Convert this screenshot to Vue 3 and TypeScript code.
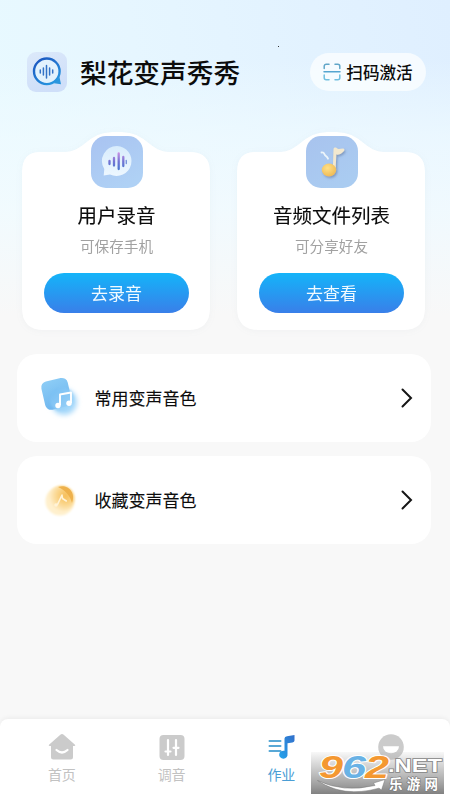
<script setup lang="ts">
interface Card { id: 'record' | 'files'; title: string; note: string; action: string }
interface Row { id: 'common' | 'favorite'; label: string }
interface Tab { id: 'home' | 'tune' | 'work' | 'mine'; label?: string }

const cards: Card[] = [
  { id: 'record', title: '用户录音', note: '可保存手机', action: '去录音' },
  { id: 'files', title: '音频文件列表', note: '可分享好友', action: '去查看' },
]
const rows: Row[] = [
  { id: 'common', label: '常用变声音色' },
  { id: 'favorite', label: '收藏变声音色' },
]
const tabs: Tab[] = [
  { id: 'home', label: '首页' },
  { id: 'tune', label: '调音' },
  { id: 'work', label: '作业' },
  { id: 'mine' },
]
const active: Tab['id'] = 'work'
</script>

<template>
  <div class="page">
    <header class="header">
      <svg class="logo" viewBox="0 0 42 42">
        <defs>
          <linearGradient id="logoBg" x1="0" y1="0" x2="0.4" y2="1">
            <stop offset="0" stop-color="#dce9fa" /><stop offset="1" stop-color="#cfdff9" />
          </linearGradient>
          <linearGradient id="logoRing" x1="0" y1="0" x2="0.7" y2="1">
            <stop offset="0" stop-color="#1b51bd" /><stop offset="1" stop-color="#2796e0" />
          </linearGradient>
        </defs>
        <rect x="1" y="1" width="40" height="40" rx="9" fill="url(#logoBg)" />
        <path d="M28 32.3 L35 33.2 L33.5 26 Z" fill="#2b97de" />
        <circle cx="20.8" cy="20.3" r="12.8" fill="#e2f2fd" stroke="url(#logoRing)" stroke-width="2.4" />
        <path d="M14.3 19v3M17.4 17v7M20.5 14.5v12.5M23.6 17v7M26.7 19v3" stroke="#3272c6" stroke-width="1.5" stroke-linecap="round" />
      </svg>
      <h1 class="brand">梨花变声秀秀</h1>
      <button class="scan">
        <svg class="scan-icon" viewBox="0 0 18 18" fill="none" stroke-width="1.5" stroke-linecap="round">
          <path d="M1.2 5.5V3.2a2 2 0 0 1 2-2H6M12 1.2h2.8a2 2 0 0 1 2 2v2.3" stroke="#61a6c8" />
          <path d="M1.2 12v2.8a2 2 0 0 0 2 2H6M12 16.8h2.8a2 2 0 0 0 2-2V12" stroke="#70bfdf" />
          <path d="M1 8.8h16" stroke="#55a5d0" />
        </svg>
        <span>扫码激活</span>
      </button>
    </header>
    <i class="speck"></i>

    <main>
      <section class="cards">
        <article v-for="card in cards" :key="card.id" class="card">
          <svg class="card-shape" viewBox="0 0 188 200">
            <path
              d="M18 22 H42 C52 22 57 18 66 11 C75 4 82 2 95 2 C108 2 115 4 124 11 C133 18 138 22 148 22 H168 Q188 22 188 42 V178 Q188 200 166 200 H22 Q0 200 0 178 V42 Q0 22 18 22Z"
              fill="#fff"
            />
          </svg>
          <svg v-if="card.id === 'record'" class="badge" viewBox="0 0 52 52">
            <defs>
              <linearGradient id="badgeA" x1="0" y1="0" x2="0.6" y2="1">
                <stop offset="0" stop-color="#a9c3f1" /><stop offset="1" stop-color="#afd1f5" />
              </linearGradient>
              <linearGradient id="bubble" x1="0" y1="0" x2="0" y2="1">
                <stop offset="0" stop-color="#d8ecfc" /><stop offset="1" stop-color="#edf7ff" />
              </linearGradient>
              <linearGradient id="wave" x1="0" y1="16" x2="0" y2="35" gradientUnits="userSpaceOnUse">
                <stop offset="0" stop-color="#cf91e4" /><stop offset=".5" stop-color="#7374d4" /><stop offset="1" stop-color="#4279cf" />
              </linearGradient>
            </defs>
            <rect width="52" height="52" rx="15" fill="url(#badgeA)" />
            <path d="M26 10 A15 15 0 1 1 19 38.5 L12.7 39.5 L13.3 33 A15 15 0 0 1 26 10Z" fill="url(#bubble)" />
            <path d="M18.5 25v3M23 22v7.5M27.7 17.5v15.5M32.3 21v9" stroke="url(#wave)" stroke-width="2.3" stroke-linecap="round" />
            <path d="M35.3 24.5v3" stroke="#7994db" stroke-width="1.4" stroke-linecap="round" />
          </svg>
          <svg v-else class="badge" viewBox="0 0 52 52">
            <defs>
              <linearGradient id="badgeB" x1="0" y1="0" x2="0.6" y2="1">
                <stop offset="0" stop-color="#a8c3ee" /><stop offset="1" stop-color="#aaccf1" />
              </linearGradient>
              <radialGradient id="gold" cx=".4" cy=".35" r=".7">
                <stop offset="0" stop-color="#ffe087" /><stop offset="1" stop-color="#edb954" />
              </radialGradient>
              <filter id="noteShadow" x="-30%" y="-30%" width="170%" height="170%">
                <feDropShadow dx="1.2" dy="1.5" stdDeviation="1.3" flood-color="#60779b" flood-opacity=".6" />
              </filter>
            </defs>
            <rect width="52" height="52" rx="15" fill="url(#badgeB)" />
            <g filter="url(#noteShadow)">
              <path d="M27.5 13 C28 10.8 30.5 11.2 31 12.3 C32.5 13.6 35 12.3 37.3 12.4 C38.8 12.6 38.7 14.5 37.5 15.6 C35 18.3 32.5 19 30.3 18.6 L29.6 34 L26.8 34Z" fill="#f2e8cf" />
              <ellipse cx="23" cy="34" rx="7.2" ry="6.4" fill="url(#gold)" />
            </g>
            <path d="M15.5 16.5 C19 16 18 19 19.8 20 C20.8 20.7 21.3 21 22 22.7" fill="none" stroke="#edf5fa" stroke-width="1.8" stroke-linecap="round" />
          </svg>
          <h2 class="card-title">{{ card.title }}</h2>
          <p class="card-note">{{ card.note }}</p>
          <button class="card-action">{{ card.action }}</button>
        </article>
      </section>

      <section class="rows">
        <div v-for="row in rows" :key="row.id" class="row">
          <svg v-if="row.id === 'common'" class="row-icon" viewBox="0 0 48 48">
            <defs>
              <linearGradient id="tile" x1="0" y1="0" x2="1" y2="1">
                <stop offset="0" stop-color="#72bbf2" /><stop offset="1" stop-color="#abdcfb" />
              </linearGradient>
              <linearGradient id="tileBack" x1="0" y1="0" x2="0.2" y2="1">
                <stop offset="0" stop-color="#8dcdf6" /><stop offset="1" stop-color="#70b7ef" />
              </linearGradient>
              <filter id="soft" x="-40%" y="-40%" width="180%" height="180%"><feGaussianBlur stdDeviation="2.8" /></filter>
              <filter id="softEdge" x="-20%" y="-20%" width="140%" height="140%"><feGaussianBlur stdDeviation="1" /></filter>
            </defs>
            <circle cx="28" cy="28" r="13" fill="#a9d9fa" filter="url(#soft)" />
            <rect x="7" y="5.5" width="27" height="29" rx="6" fill="url(#tileBack)" transform="rotate(-13 20 20)" />
            <rect x="14" y="14" width="24" height="23" rx="11" fill="url(#tile)" opacity=".8" filter="url(#softEdge)" />
            <path d="M24 31.2 V20.5 L35 18.5 V29" fill="none" stroke="#fff" stroke-width="1.9" stroke-linejoin="round" />
            <circle cx="22" cy="31.5" r="2.7" fill="#fff" /><circle cx="33" cy="29.3" r="2.7" fill="#fff" />
          </svg>
          <svg v-else class="row-icon" viewBox="0 0 48 48">
            <defs>
              <radialGradient id="disc" cx=".65" cy=".4" r=".65">
                <stop offset="0" stop-color="#f6bd58" /><stop offset=".5" stop-color="#fad58a" /><stop offset="1" stop-color="#fff0cf" />
              </radialGradient>
              <filter id="discBlur" x="-20%" y="-20%" width="140%" height="140%"><feGaussianBlur stdDeviation="1" /></filter>
            </defs>
            <circle cx="24" cy="25" r="14.5" fill="#fff0cd" filter="url(#discBlur)" />
            <circle cx="25.5" cy="22.5" r="13" fill="url(#disc)" filter="url(#discBlur)" />
            <path d="M22 11 C31 7.5 40.5 16 36 27 C34.5 20 29 14 22 11Z" fill="#eeb14c" />
            <path d="M21.5 28.5 L26 19 L26.5 22.5 L30.3 25" fill="none" stroke="#fff3d8" stroke-width="1.6" stroke-linecap="round" stroke-linejoin="round" />
            <circle cx="20" cy="29" r="1.8" fill="#fff3d8" />
          </svg>
          <span class="row-label">{{ row.label }}</span>
          <svg class="chevron" viewBox="0 0 12 20"><path d="M1.5 1.5 L10 10 L1.5 18.5" fill="none" stroke="#151515" stroke-width="2" stroke-linecap="round" /></svg>
        </div>
      </section>
    </main>

    <nav class="tabs">
      <a v-for="tab in tabs" :key="tab.id" class="tab" :class="{ active: tab.id === active }">
        <svg v-if="tab.id === 'home'" class="tab-icon" viewBox="0 0 30 30">
          <path d="M13.3 2.8 Q15 1.2 16.7 2.8 L28 12.7 Q29 14 27 14 H26 V25 Q26 27.5 23.5 27.5 H6.5 Q4 27.5 4 25 V14 H3 Q1 14 2 12.7Z" fill="#cbcbcb" />
          <path d="M9.5 18 Q15 23 20.5 18" fill="none" stroke="#fff" stroke-width="2.2" stroke-linecap="round" />
        </svg>
        <svg v-else-if="tab.id === 'tune'" class="tab-icon" viewBox="0 0 30 30">
          <rect x="2.5" y="3" width="25" height="25" rx="4" fill="#cbcbcb" />
          <path d="M11 8v15M19 8v15M8.5 19.5h5M16.5 15.8h5" fill="none" stroke="#fff" stroke-width="2.2" stroke-linecap="round" />
        </svg>
        <svg v-else-if="tab.id === 'work'" class="tab-icon" viewBox="0 0 30 30">
          <defs>
            <linearGradient id="work" x1="0" y1="1" x2="1" y2="0"><stop offset="0" stop-color="#23a4ec" /><stop offset="1" stop-color="#336fca" /></linearGradient>
          </defs>
          <path d="M3.5 9h11M3.5 14h11M3.5 19h11" stroke="#58a8d6" stroke-width="2" stroke-linecap="round" />
          <path d="M18.5 6.5 Q18.5 4.5 21 4.3 L28.5 3 V8.5 Q28.5 10.2 26.5 10.5 L21.5 11.2 V22 A4.2 4 0 1 1 18.5 18.8Z" fill="url(#work)" />
        </svg>
        <svg v-else class="tab-icon" viewBox="0 0 30 30">
          <circle cx="15" cy="15" r="12.8" fill="#cbcbcb" />
          <path d="M7 14.3 H23 A8 7 0 0 1 7 14.3Z" fill="#fff" />
        </svg>
        <span v-if="tab.label">{{ tab.label }}</span>
      </a>
    </nav>

    <svg class="stamp" viewBox="0 0 133 44">
      <defs>
        <linearGradient id="stampBg" x1="0" y1="0" x2="0" y2="1">
          <stop offset="0" stop-color="#a5a5a5" stop-opacity="0.08" /><stop offset=".5" stop-color="#a5a5a5" stop-opacity="0.7" /><stop offset="1" stop-color="#818181" />
        </linearGradient>
      </defs>
      <rect y="2" width="133" height="42" fill="url(#stampBg)" />
      <path d="M6.5 30.5 Q32 43 64 35.5 L62.5 33 L74 29.5 L70.5 40 L68 38.2 Q32 48 6.5 30.5Z" fill="#fff" stroke="#777" stroke-width=".5" />
      <g class="digits">
        <text x="8" y="27.5" textLength="24" lengthAdjust="spacingAndGlyphs" fill="#f49831" stroke="#fff">9</text>
        <text x="31" y="27.5" textLength="24" lengthAdjust="spacingAndGlyphs" fill="#69b2e5" stroke="#fff">6</text>
        <text x="54" y="27.5" textLength="24" lengthAdjust="spacingAndGlyphs" fill="#f49831" stroke="#fff">2</text>
      </g>
      <text class="net" x="77" y="21.5" textLength="54" lengthAdjust="spacingAndGlyphs">.NET</text>
      <text class="site" x="78" y="39" textLength="49">乐游网</text>
    </svg>
  </div>
</template>

<style>
body { margin: 0; }
</style>

<style scoped>
.page {
  position: relative;
  display: flex;
  flex-direction: column;
  width: 450px;
  height: 800px;
  overflow: hidden;
  font-family: "Noto Sans CJK SC", sans-serif;
  color: #0c0c0c;
  background:
    linear-gradient(180deg, rgba(240, 251, 255, 0) 60px, rgba(240, 251, 255, .65) 135px, rgba(243, 251, 254, .85) 210px, #f8f8f8 315px),
    linear-gradient(80deg, #e9fbff 0, #e6f6ff 45%, #dfefff 100%);
}
h1, h2, p { margin: 0; }
button { border: 0; padding: 0; font-family: inherit; color: inherit; }
.header { display: flex; align-items: center; height: 42px; padding: 51px 24px 0 26px; }
.logo { width: 42px; height: 42px; }
.brand { margin-left: 12px; font-size: 26.7px; line-height: 40px; font-weight: 500; }
.scan {
  display: flex; align-items: center; justify-content: center; gap: 5px;
  width: 116px; height: 38px; margin-left: auto; border-radius: 19px;
  background: rgba(249, 253, 255, .85); font-size: 16.6px; font-weight: 500;
}
.scan-icon { width: 18px; height: 18px; }
.speck { position: absolute; left: 278px; top: 46px; width: 1px; height: 1px; background: #333; }
.cards { display: flex; gap: 27px; padding: 37px 25px 0 22px; }
.card { position: relative; display: flex; flex-direction: column; align-items: center; box-sizing: border-box; width: 188px; height: 200px; padding-left: 1px; filter: drop-shadow(0 1px 3px rgba(90, 120, 140, .05)); }
.card-shape { position: absolute; inset: 0; width: 188px; height: 200px; }
.card > :not(.card-shape) { position: relative; }
.badge { width: 52px; height: 52px; margin-top: 6px; }
.card-title { margin-top: 12px; font-size: 19.5px; line-height: 30px; font-weight: 400; -webkit-text-stroke: 0.12px #0c0c0c; }
.card-note { margin-top: 6px; font-size: 14.6px; line-height: 20px; color: #a1a1a1; }
.card-action { width: 145px; height: 40px; margin-top: 17px; border-radius: 20px; background: linear-gradient(#14b4f9, #397fe9); color: #f0faff; font-size: 17px; line-height: 40px; }
.rows { display: flex; flex-direction: column; gap: 14px; padding: 24px 19px 0 17px; }
.row { display: flex; align-items: center; height: 88px; padding: 0 18px 0 19px; border-radius: 20px; background: #fff; }
.row-icon { width: 48px; height: 48px; }
.row-label { margin-left: 10.5px; font-size: 17px; line-height: 26px; -webkit-text-stroke: 0.1px #0c0c0c; }
.chevron { width: 12px; height: 20px; margin-left: auto; }
.tabs { display: flex; height: 81px; margin-top: auto; padding: 0 4px 0 7px; border-radius: 8px 8px 0 0; background: #fff; box-shadow: 0 -1px 5px rgba(0, 0, 0, .06); }
.tab { display: flex; flex: 1; flex-direction: column; align-items: center; padding-top: 13px; color: #c2c2c2; font-size: 14px; line-height: 20px; }
.tab-icon { width: 30px; height: 30px; margin-bottom: 2px; }
.tab.active { color: #4b9ed5; }
.stamp { position: absolute; left: 311px; top: 749.5px; width: 133px; height: 44px; }
.digits { font: italic 700 32px "Liberation Sans", sans-serif; paint-order: stroke; stroke-width: 2px; stroke-linejoin: round; }
.net { font: 700 18px "Liberation Sans", sans-serif; fill: #fff; paint-order: stroke; stroke: #858585; stroke-width: 1.5px; }
.site { font: 700 13.5px "Noto Sans CJK SC", sans-serif; fill: #fff; paint-order: stroke; stroke: #777; stroke-width: 1.2px; }
</style>
